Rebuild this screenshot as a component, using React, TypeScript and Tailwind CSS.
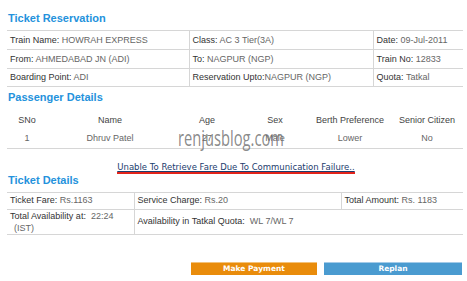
import React from 'react';

const Field = ({ label, value, gap = ' ' }: { label: string; value: string; gap?: string }) => (
    <>
        <span className="text-[#333]">{label}</span>
        {gap}
        <span className="text-[#666]">{value}</span>
    </>
);

const Heading = ({ children }: { children: React.ReactNode }) => (
    <h2 className="h-[13px] px-2 text-[11px] font-bold leading-[13px] text-[#2492dc]">{children}</h2>
);

const cell = 'whitespace-nowrap px-[3px] align-middle';
const line = 'border-[#d6d6d6]';

export default function App() {
    return (
        <div className="relative h-[281px] w-[467px] overflow-hidden bg-white font-['Liberation_Sans',Arial,sans-serif] text-[9px] leading-[11px]">
            <div className="pt-[12px]">
                <Heading>Ticket Reservation</Heading>
            </div>

            <table className="ml-[7px] mt-[5px] w-[456px] table-fixed border-collapse">
                <colgroup>
                    <col className="w-[182px]" />
                    <col className="w-[184px]" />
                    <col />
                </colgroup>
                <tbody>
                    <tr className={`h-[19px] border-y ${line}`}>
                        <td className={cell}><Field label="Train Name:" value="HOWRAH EXPRESS" /></td>
                        <td className={`${cell} border-l ${line}`}><Field label="Class:" value="AC 3 Tier(3A)" /></td>
                        <td className={`${cell} border-l ${line}`}><Field label="Date:" value="09-Jul-2011" /></td>
                    </tr>
                    <tr className={`h-[19px] border-y ${line}`}>
                        <td className={cell}><Field label="From:" value="AHMEDABAD JN (ADI)" /></td>
                        <td className={`${cell} border-l ${line}`}><Field label="To:" value="NAGPUR (NGP)" /></td>
                        <td className={`${cell} border-l ${line}`}><Field label="Train No:" value="12833" /></td>
                    </tr>
                    <tr className={`h-[18px] border-y ${line}`}>
                        <td className={cell}><Field label="Boarding Point:" value="ADI" /></td>
                        <td className={`${cell} border-l ${line}`}><Field label="Reservation Upto:" value="NAGPUR (NGP)" gap="" /></td>
                        <td className={`${cell} border-l ${line}`}><Field label="Quota:" value="Tatkal" /></td>
                    </tr>
                </tbody>
            </table>

            <div className="pt-[4px]">
                <Heading>Passenger Details</Heading>
            </div>

            <table className="ml-[7px] mt-[7px] w-[456px] table-fixed border-collapse text-center">
                <colgroup>
                    <col className="w-[40px]" />
                    <col className="w-[126px]" />
                    <col className="w-[68px]" />
                    <col className="w-[68px]" />
                    <col className="w-[82px]" />
                    <col />
                </colgroup>
                <tbody>
                    <tr className="h-[18px] text-[#444]">
                        <td>SNo</td>
                        <td>Name</td>
                        <td>Age</td>
                        <td>Sex</td>
                        <td className="whitespace-nowrap">Berth Preference</td>
                        <td className="whitespace-nowrap">Senior Citizen</td>
                    </tr>
                    <tr className={`h-[19px] border-b ${line} text-[#666]`}>
                        <td>1</td>
                        <td>Dhruv Patel</td>
                        <td>27</td>
                        <td>Male</td>
                        <td>Lower</td>
                        <td>No</td>
                    </tr>
                </tbody>
            </table>

            <div className="flex justify-center pl-[5px] pt-[13px]">
                <div className="flex flex-col">
                    <span className="whitespace-nowrap font-['DejaVu_Sans',Verdana,sans-serif] text-[8.5px] leading-[10px] text-[#1c3d6e] underline">
                        Unable To Retrieve Fare Due To Communication Failure..
                    </span>
                    <div className="h-[2px] w-full bg-[#e2231a]" />
                </div>
            </div>

            <Heading>Ticket Details</Heading>

            <table className="ml-[7px] mt-[5px] w-[456px] table-fixed border-collapse">
                <colgroup>
                    <col className="w-[127px]" />
                    <col className="w-[207px]" />
                    <col />
                </colgroup>
                <tbody>
                    <tr className={`h-[17px] border-y ${line}`}>
                        <td className={cell}><Field label="Ticket Fare:" value="Rs.1163" /></td>
                        <td className={`${cell} border-l ${line}`}><Field label="Service Charge:" value="Rs.20" /></td>
                        <td className={`${cell} border-l ${line}`}><Field label="Total Amount:" value="Rs. 1183" /></td>
                    </tr>
                    <tr className={`h-[23px] border-y ${line}`}>
                        <td className={`${cell} leading-[12px]`}>
                            <Field label="Total Availability at:" value={'\u00a0 22:24'} gap="" />
                            <br />
                            <span className="pl-[4px] text-[#666]">(IST)</span>
                        </td>
                        <td colSpan={2} className={`${cell} border-l ${line}`}>
                            <Field label="Availability in Tatkal Quota:" value={'\u00a0 WL 7/WL 7'} gap="" />
                        </td>
                    </tr>
                </tbody>
            </table>

            <div className="mt-[27px] flex gap-[7px] pl-[191px] font-['DejaVu_Sans',Verdana,sans-serif] text-[7.5px] font-bold leading-[10px] text-white">
                <button className="flex h-[13px] w-[126px] items-center justify-center border-t border-[#f3c27a] bg-[#e98c0b]">
                    Make Payment
                </button>
                <button className="flex h-[13px] w-[138px] items-center justify-center border-t border-[#a4cbe8] bg-[#4a9bd0]">
                    Replan
                </button>
            </div>

            <div className="pointer-events-none absolute left-[178px] top-[124px] origin-left scale-x-[0.7] whitespace-nowrap font-['Open_Sans',Arial,sans-serif] text-[21px] leading-[28px] text-[#6c6c6c]/80">
                renjusblog.com
            </div>
        </div>
    );
}
